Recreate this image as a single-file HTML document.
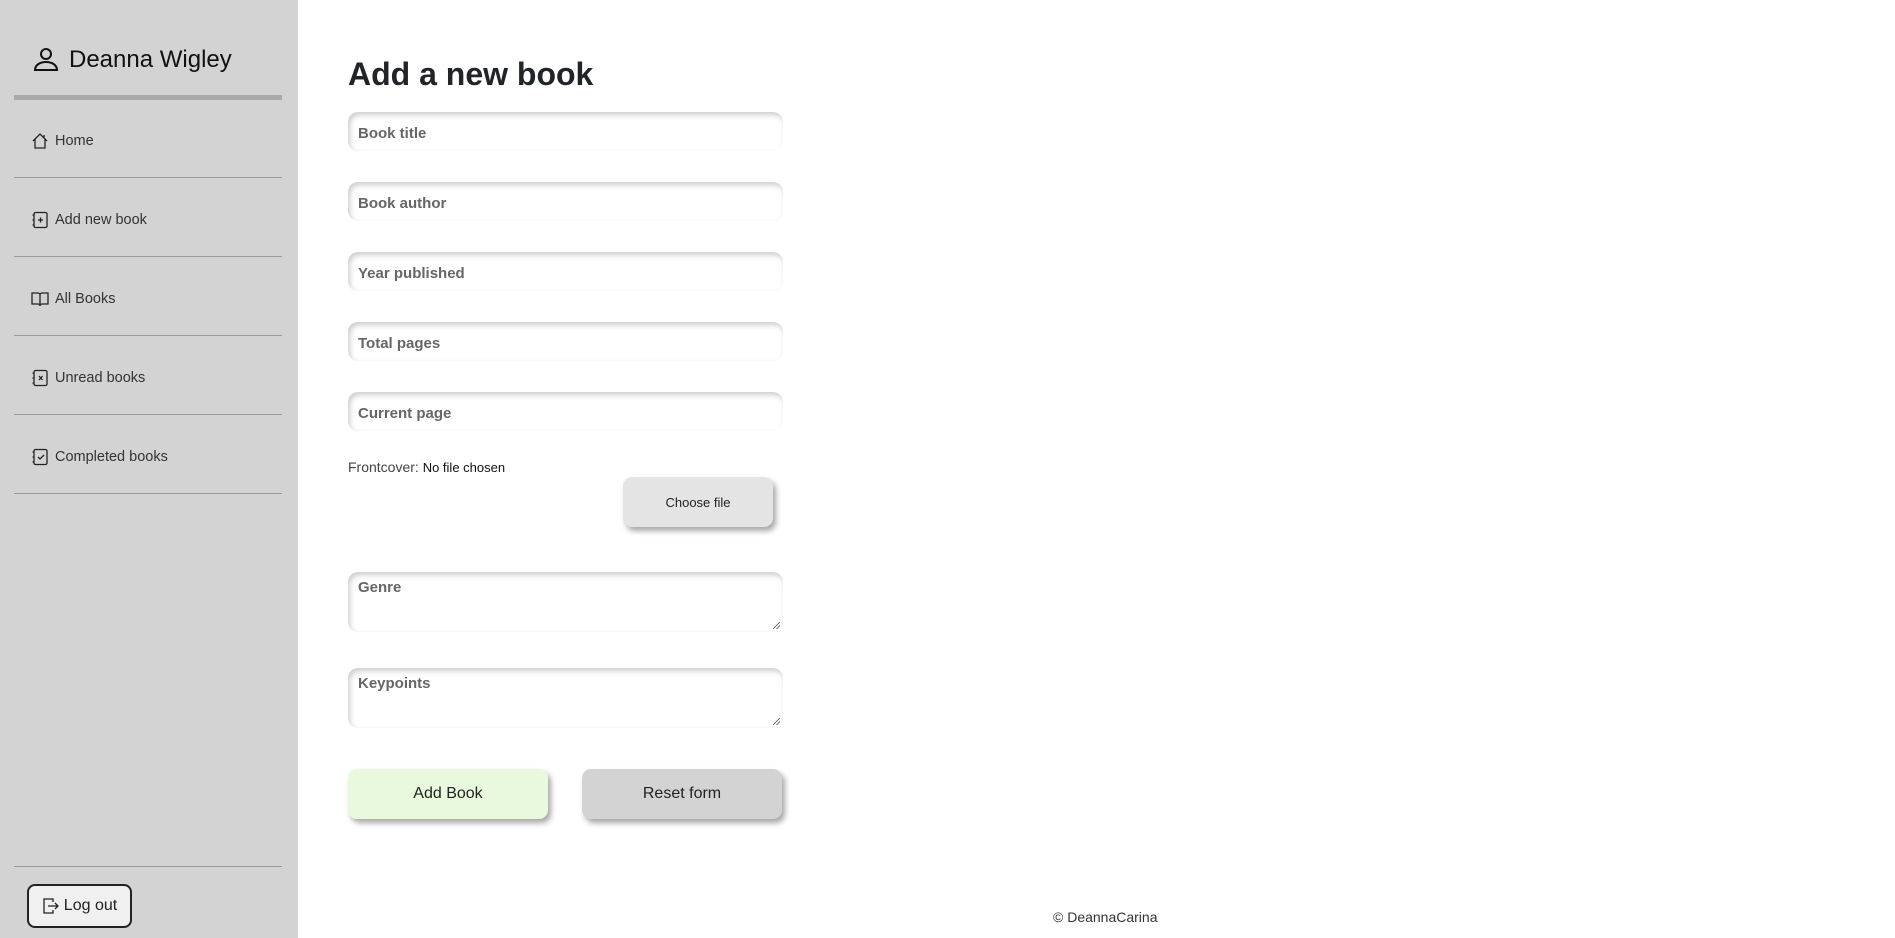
<!DOCTYPE html>
<html><head><meta charset="utf-8"><style>
*{box-sizing:border-box;margin:0;padding:0}
body{width:1895px;height:938px;position:relative;background:#fff;font-family:"Liberation Sans",sans-serif;overflow:hidden;color:#222}
.side{position:absolute;left:0;top:0;width:298px;height:938px;background:#d3d3d3}
.name{position:absolute;left:33px;top:46px;font-size:24px;color:#111;display:flex;align-items:center;gap:10px}
.thick{position:absolute;left:14px;top:95px;width:268px;height:5px;background:#aaa}
.line{position:absolute;left:14px;width:268px;height:1px;background:#9a9a9a}
.nav{position:absolute;left:31px;font-size:14.5px;color:#333;display:flex;align-items:center;gap:6px;height:20px}
.nav svg{width:18px;height:18px}
.logout{position:absolute;left:27px;top:884px;width:105px;height:44px;border:2px solid #222;border-radius:8px;background:#f0f0f0;font-size:16px;display:flex;align-items:center;justify-content:center;gap:4px}
h1{position:absolute;left:348px;top:56px;font-size:32px;font-weight:bold;color:#212529}
.in{position:absolute;left:348px;width:435px;height:39px;border-radius:10px;background:#fff;box-shadow:inset 2px 3px 6px rgba(0,0,0,.2);font-size:15px;font-weight:bold;color:#666;padding:13px 10px 0}
.ta{height:60px;padding:7px 10px}
.ta::after{content:"";position:absolute;right:3px;bottom:3px;width:7px;height:7px;background:linear-gradient(135deg,transparent 45%,#777 45%,#777 55%,transparent 55%,transparent 70%,#777 70%,#777 80%,transparent 80%)}
.btn{position:absolute;border-radius:9px;box-shadow:3px 4px 6px rgba(0,0,0,.35);display:flex;align-items:center;justify-content:center;color:#222}
</style></head><body>
<div class="side">
 <div class="name"><svg width="26" height="26" viewBox="0 0 26 26" fill="none" stroke="#111" stroke-width="2"><circle cx="13" cy="7" r="5"/><path d="M2 23c0-5 5-8 11-8s11 3 11 8z"/></svg>Deanna Wigley</div>
 <div class="thick"></div>
 <div class="nav" style="top:131px"><svg viewBox="0 0 18 18" fill="none" stroke="#222" stroke-width="1.3"><path d="M2 9L9 2l7 7M4 7v9h10V7M13 3v3"/></svg>Home</div>
 <div class="line" style="top:177px"></div>
 <div class="nav" style="top:210px"><svg viewBox="0 0 18 18" fill="none" stroke="#222" stroke-width="1.3"><rect x="3" y="1.5" width="13" height="15" rx="1.5"/><path d="M1.5 4h2M1.5 9h2M1.5 14h2M9.5 6.5v5M7 9h5"/></svg>Add new book</div>
 <div class="line" style="top:256px"></div>
 <div class="nav" style="top:289px"><svg viewBox="0 0 18 18" fill="none" stroke="#222" stroke-width="1.3"><path d="M1 3h6a2 2 0 0 1 2 2v11a2 2 0 0 0-2-2H1zM17 3h-6a2 2 0 0 0-2 2v11a2 2 0 0 1 2-2h6z"/></svg>All Books</div>
 <div class="line" style="top:335px"></div>
 <div class="nav" style="top:368px"><svg viewBox="0 0 18 18" fill="none" stroke="#222" stroke-width="1.3"><rect x="3" y="1.5" width="13" height="15" rx="1.5"/><path d="M1.5 4h2M1.5 9h2M1.5 14h2M8 7l3.5 4M11.5 7L8 11"/></svg>Unread books</div>
 <div class="line" style="top:414px"></div>
 <div class="nav" style="top:447px"><svg viewBox="0 0 18 18" fill="none" stroke="#222" stroke-width="1.3"><rect x="3" y="1.5" width="13" height="15" rx="1.5"/><path d="M1.5 4h2M1.5 9h2M1.5 14h2M7 9l2 2 4-4"/></svg>Completed books</div>
 <div class="line" style="top:493px"></div>
 <div class="line" style="top:866px"></div>
 <div class="logout"><svg width="18" height="18" viewBox="0 0 18 18" fill="none" stroke="#222" stroke-width="1.3"><path d="M11 5V2H2v14h9v-3M6 9h10M13 6l3 3-3 3"/></svg>Log out</div>
</div>
<h1>Add a new book</h1>
<div class="in" style="top:112px">Book title</div>
<div class="in" style="top:182px">Book author</div>
<div class="in" style="top:252px">Year published</div>
<div class="in" style="top:322px">Total pages</div>
<div class="in" style="top:392px">Current page</div>
<div style="position:absolute;left:348px;top:459px;font-size:14px;color:#444">Frontcover: <span style="font-size:13px;color:#111">No file chosen</span></div>
<div class="btn" style="left:623px;top:477px;width:150px;height:50px;background:#e4e4e4;font-size:13px">Choose file</div>
<div class="in ta" style="top:572px">Genre</div>
<div class="in ta" style="top:668px">Keypoints</div>
<div class="btn" style="left:348px;top:769px;width:200px;height:50px;background:#e8f9dd;font-size:16px">Add Book</div>
<div class="btn" style="left:582px;top:769px;width:200px;height:50px;background:#d3d3d3;font-size:16px">Reset form</div>
<div style="position:absolute;left:1053px;top:909px;font-size:14px;color:#333">© DeannaCarina</div>
</body></html>
